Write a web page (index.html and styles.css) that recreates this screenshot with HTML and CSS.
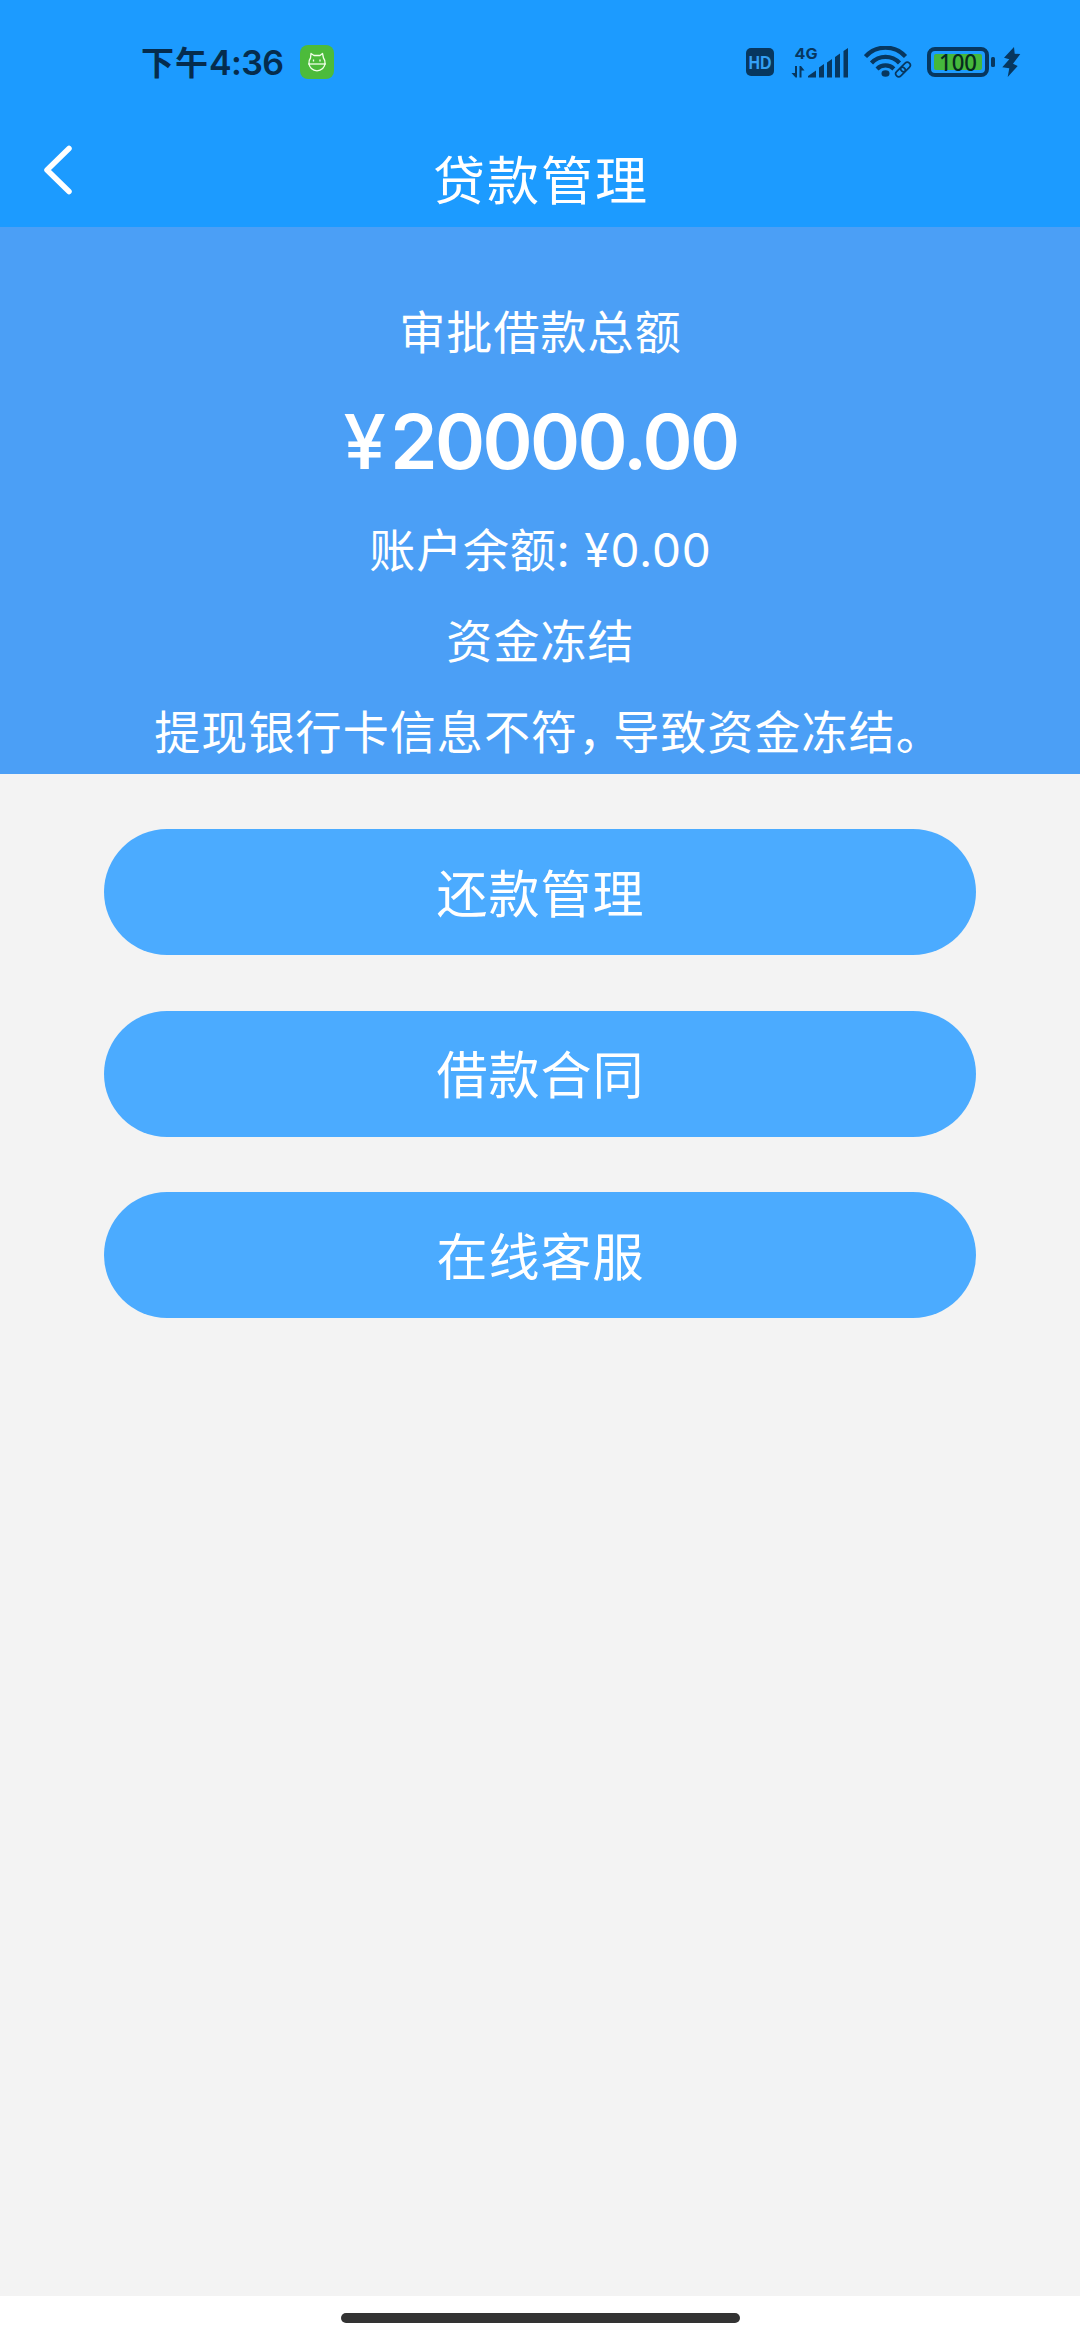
FILE: index.html
```html
<!DOCTYPE html>
<html lang="zh-CN">
<head>
  <meta charset="UTF-8" />
  <meta name="viewport" content="width=device-width, initial-scale=1" />
  <title>贷款管理</title>
  <link rel="stylesheet" href="styles.css">
</head>
<body>
  <header class="header">
    <!-- Status bar -->
    <div class="status-bar">
      <span class="time">下午<span class="clock">4:36</span></span>
      <svg class="app-icon" width="34" height="34" viewBox="0 0 34 34">
        <rect width="34" height="34" rx="8" fill="#4cbb3b" />
        <g fill="none" stroke="#f2ffe9" stroke-width="1.3" stroke-linejoin="round">
          <path d="M10.500 13 L11 8.500 L14 10.500 H20 L22.500 8.500 L23.500 13 Q25 15 25 18 A8 7.800 0 0 1 9 18 Q9 15 10.500 13 Z" />
          <path d="M8 19 H26" />
          <path d="M13.500 14.500 V16.500 M20 14.500 V16.500" />
        </g>
      </svg>

      <div class="status-icons">
        <svg class="hd" width="28" height="28" viewBox="0 0 28 28">
          <rect width="28" height="28" rx="5" fill="#07375f" />
          <text x="14" y="20.500" text-anchor="middle" textLength="23" lengthAdjust="spacingAndGlyphs" class="hd-text">HD</text>
        </svg>
        <svg class="signal" width="58" height="39" viewBox="0 -4 58 39" fill="#07375f">
          <text x="3.500" y="11.500" textLength="23" lengthAdjust="spacingAndGlyphs" class="net-text">4G</text>
          <path d="M4 19 H6 V30.500 H4.500 L0.500 26 H4 Z M8.500 30.500 V19 H10 L13.500 23.500 H10.500 V30.500 Z" />
          <path d="M17 30.500 V29 L25 23.500 V30.500 Z M28 30.500 V20.500 L33 17 V30.500 Z M36 30.500 V15.500 L41 12 V30.500 Z M44 30.500 V10 L49 6.500 V30.500 Z M52.500 30.500 V4 L57 1 V30.500 Z" />
        </svg>
        <svg class="wifi" width="48" height="32" viewBox="0 0 48 32">
          <g fill="none" stroke="#07375f" stroke-width="4.200">
            <path d="M1.500 10.500 A27 27 0 0 1 41.500 10.500" />
            <path d="M7.500 17 A19 19 0 0 1 35.500 17" />
            <path d="M13 23 A12 12 0 0 1 30 23" />
          </g>
          <ellipse cx="21.500" cy="27.500" rx="4" ry="3.200" fill="#07375f" />
          <g fill="none" stroke="#1c9bff" stroke-width="4.500">
            <rect x="30" y="22" width="11" height="6.500" rx="3.200" transform="rotate(-45 35.500 25.250)" />
          </g>
          <g fill="none" stroke="#07375f" stroke-width="1.700">
            <rect x="31" y="23" width="11" height="6" rx="3" transform="rotate(-45 36.500 26)" />
            <rect x="36" y="18" width="11" height="6" rx="3" transform="rotate(-45 41.500 21)" />
          </g>
        </svg>
        <svg class="battery" width="68" height="30" viewBox="0 0 68 30">
          <rect x="2" y="2" width="58" height="26" rx="6" fill="none" stroke="#07375f" stroke-width="4" />
          <rect x="7" y="7" width="48" height="16" rx="2" fill="#45b83c" />
          <rect x="64" y="10" width="4" height="10" rx="1.500" fill="#07375f" />
          <text x="31" y="23.500" text-anchor="middle" textLength="38" lengthAdjust="spacingAndGlyphs" class="battery-text">100</text>
        </svg>
        <svg class="bolt" width="19" height="30" viewBox="0 0 19 30">
          <path d="M12 0 L2 10.700 L7.300 12.300 L0.300 20.300 L7.300 21.300 L5.700 30 L15.700 19 L11 16.700 L18.300 7 L12.700 6.700 Z" fill="#07375f" />
        </svg>
      </div>
    </div>

    <!-- Title bar -->
    <div class="nav">
      <a class="back" href="#">
        <svg width="30" height="52" viewBox="0 0 30 52" fill="none" stroke="#fff" stroke-width="5.500" stroke-linecap="round" stroke-linejoin="round">
          <path d="M26 4.500 L4 26 L26 47.500" />
        </svg>
      </a>
      <h1>贷款管理</h1>
    </div>
  </header>

  <!-- Loan summary -->
  <section class="summary">
    <p>审批借款总额</p>
    <p class="amount"><span class="yen">¥</span>20000.00</p>
    <p class="balance">账户余额: ¥0.00</p>
    <p>资金冻结</p>
    <p>提现银行卡信息不符<span class="comma">，</span>导致资金冻结<span class="stop">。</span></p>
  </section>

  <main class="actions">
    <button class="btn">还款管理</button>
    <button class="btn">借款合同</button>
    <button class="btn">在线客服</button>
  </main>

  <footer class="home-bar">
    <div class="home-pill"></div>
  </footer>
</body>
</html>
```
FILE: styles.css
```css
:root {
  --header: #1c9bff;
  --panel: #4b9ff6;
  --btn: #4babff;
  --bg: #f3f3f3;
}
* {
  box-sizing: border-box;
}
body {
  display: flex;
  flex-direction: column;
  height: 2340px;
  margin: 0;
  background: var(--bg);
  color: #fff;
  font-family: Inter, 'Noto Sans CJK SC', sans-serif;
}
.header {
  height: 227px;
  background: var(--header);
}
.status-bar {
  display: flex;
  align-items: center;
  height: 124px;
  padding: 0 59px 0 141px;
}
.time {
  color: #052c4d;
  font-size: 33px;
  font-weight: 600;
  line-height: 42px;
  letter-spacing: 1px;
  width: 159px;
  padding-top: 1px;
  white-space: nowrap;
}
.clock {
  font-size: 34px;
  letter-spacing: -0.6px;
}
.status-icons {
  display: flex;
  align-items: center;
  margin-left: auto;
}
.signal {
  margin-left: 17px;
}
.wifi {
  margin-left: 15px;
}
.battery {
  margin-left: 15px;
}
.bolt {
  margin-left: 7px;
}
.hd-text {
  fill: #34a0f5;
  font-family: 'Liberation Sans', sans-serif;
  font-size: 18px;
  font-weight: 700;
}
.net-text {
  font-size: 15px;
  font-weight: 700;
}
.battery-text {
  fill: #062b1f;
  font-family: 'Noto Sans', sans-serif;
  font-size: 23px;
  font-weight: 500;
}
.nav {
  display: grid;
  grid-template-columns: 100px 1fr 100px;
  align-items: center;
  height: 103px;
}
.back {
  display: flex;
  padding: 0 0 12px 43px;
}
h1 {
  margin: 0;
  padding: 12px 0 0 2px;
  font-size: 52px;
  font-weight: 400;
  line-height: 80px;
  letter-spacing: 2px;
  text-align: center;
}
.summary {
  height: 547px;
  padding: 60px 0 0 1px;
  background: var(--panel);
  font-size: 46px;
  line-height: 91px;
  letter-spacing: 1.1px;
  text-align: center;
  white-space: nowrap;
}
.summary p {
  margin: 0;
}
.summary .amount {
  font-size: 76px;
  font-weight: 600;
  line-height: 127px;
  letter-spacing: -2.6px;
}
.yen {
  margin-right: 7px;
  font-weight: 500;
}
.summary .balance {
  letter-spacing: 0.8px;
}
/* half-width punctuation */
.comma,
.stop {
  font-feature-settings: 'halt';
  letter-spacing: 12px;
}
.stop {
  letter-spacing: 8px;
}
.actions {
  display: flex;
  flex: 1;
  flex-direction: column;
  gap: 55.5px;
  padding: 55px 104px 0;
}
.btn {
  height: 126px;
  padding: 0 0 3px 1px;
  background: var(--btn);
  color: #fff;
  border: none;
  border-radius: 63px;
  font-family: inherit;
  font-size: 51px;
  letter-spacing: 1px;
  cursor: pointer;
}
.home-bar {
  display: flex;
  justify-content: center;
  height: 44px;
  padding-top: 17px;
  background: #fff;
}
.home-pill {
  width: 399px;
  height: 10px;
  background: #333;
  border-radius: 5px;
}
```
